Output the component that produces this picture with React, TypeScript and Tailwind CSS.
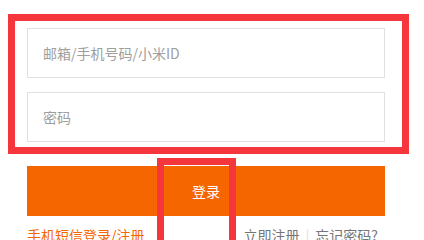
export default function App() {
  const font = { fontFamily: '"Noto Sans CJK SC", "Liberation Sans", sans-serif' };
  return (
    <div className="relative h-[240px] w-[424px] overflow-hidden bg-white" style={font}>
      <div className="flex w-[358px] flex-col pl-0 pt-[28px] ml-[27px]">
        <input
          className="h-[50px] w-full border border-[#e0e0e0] px-[15px] text-[14px] text-[#333] outline-none placeholder:text-[#9e9e9e]"
          placeholder="邮箱/手机号码/小米ID"
        />
        <input
          type="text"
          className="mt-[14px] h-[50px] w-full border border-[#e0e0e0] px-[15px] text-[14px] text-[#333] outline-none placeholder:text-[#9e9e9e]"
          placeholder="密码"
        />
        <button className="mt-[24px] h-[50px] w-full bg-[#f56600] text-[14px] text-white">登录</button>
        <div className="mt-[9px] flex items-center justify-between pr-[7px] text-[14px] leading-[20px]">
          <span className="text-[#f56600]">手机短信登录/注册</span>
          <span className="flex items-center text-[#757575]">
            立即注册
            <span className="mx-[6px] text-[#e0e0e0]">|</span>
            忘记密码?
          </span>
        </div>
      </div>
      <div className="absolute left-[8px] top-[14px] h-[140px] w-[401px] border-[7px] border-[#f6363d]" />
      <div className="absolute left-[157px] top-[158px] h-[100px] w-[79px] border-[7px] border-[#f6363d]" />
    </div>
  );
}
